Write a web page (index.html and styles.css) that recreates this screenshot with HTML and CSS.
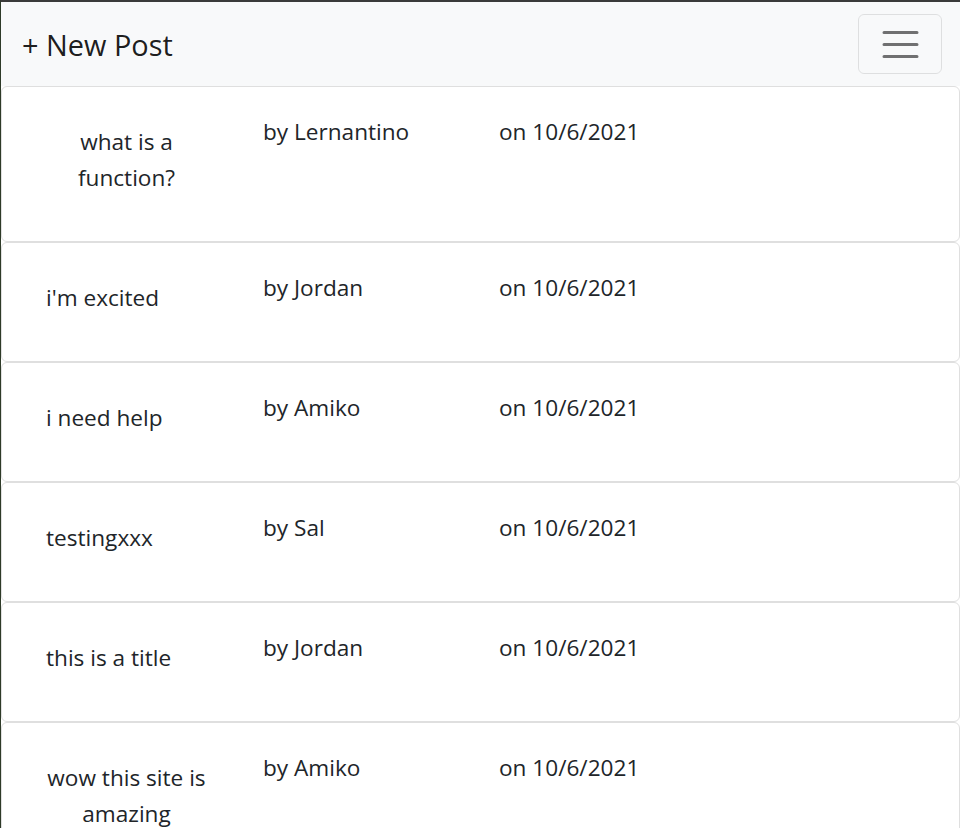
FILE: index.html
```html
<!DOCTYPE html>
<html lang="en">
<head>
<meta charset="utf-8">
<title>Posts</title>
<link rel="stylesheet" href="styles.css">
</head>
<body>
<div class="frame">
  <nav class="navbar">
    <a class="brand" href="#">+ New Post</a>
    <button class="toggler" type="button" aria-label="Toggle navigation">
      <svg class="toggler-icon" viewBox="0 0 30 30" width="45" height="45">
        <path d="M4 7h22M4 15h22M4 23h22" stroke="rgba(0,0,0,0.55)" stroke-width="2" stroke-linecap="round" stroke-miterlimit="10" fill="none"/>
      </svg>
    </button>
  </nav>
  <main class="posts">
    <div class="post">
      <div class="post-title"><span class="title-text">what is a function?</span></div>
      <div class="post-author">by Lernantino</div>
      <div class="post-date">on 10/6/2021</div>
    </div>
    <div class="post">
      <div class="post-title"><span class="title-text">i'm excited</span></div>
      <div class="post-author">by Jordan</div>
      <div class="post-date">on 10/6/2021</div>
    </div>
    <div class="post">
      <div class="post-title"><span class="title-text">i need help</span></div>
      <div class="post-author">by Amiko</div>
      <div class="post-date">on 10/6/2021</div>
    </div>
    <div class="post">
      <div class="post-title"><span class="title-text">testingxxx</span></div>
      <div class="post-author">by Sal</div>
      <div class="post-date">on 10/6/2021</div>
    </div>
    <div class="post">
      <div class="post-title"><span class="title-text">this is a title</span></div>
      <div class="post-author">by Jordan</div>
      <div class="post-date">on 10/6/2021</div>
    </div>
    <div class="post">
      <div class="post-title"><span class="title-text">wow this site is amazing</span></div>
      <div class="post-author">by Amiko</div>
      <div class="post-date">on 10/6/2021</div>
    </div>
  </main>
</div>
</body>
</html>
```

FILE: styles.css
```css
html {
  overflow: hidden;
  background: #2e3a28;
}

body {
  margin: 0;
  font-family: "Open Sans", "Noto Sans", sans-serif;
  font-size: 22.6px;
  line-height: 36px;
  color: #212529;
}

.frame {
  border-top: 2px solid #3a3a3a;
  border-left: 1px solid #2e3a28;
  background: #ffffff;
  min-height: 826px;
}

.navbar {
  display: flex;
  align-items: center;
  justify-content: space-between;
  height: 84px;
  padding: 0 18px 0 21px;
  background: #f8f9fa;
}

.brand {
  font-size: 28.9px;
  line-height: 40px;
  color: rgba(0, 0, 0, 0.9);
  text-decoration: none;
  margin-top: 2px;
}

.toggler {
  display: flex;
  align-items: center;
  justify-content: center;
  width: 84px;
  height: 60px;
  padding: 6px 18px;
  background: transparent;
  border: 1.5px solid rgba(0, 0, 0, 0.1);
  border-radius: 6px;
  box-sizing: border-box;
}

.toggler-icon {
  display: block;
  flex: none;
}

.posts {
  display: flex;
  flex-direction: column;
}

.post {
  display: grid;
  grid-template-columns: 261px 236px 1fr;
  align-items: start;
  padding: 27px 0 28px;
  background: #ffffff;
  border: 1px solid #dfdfdf;
  border-radius: 6px;
}

.post-title {
  padding: 10px 56px 17px 44px;
}

.title-text {
  display: inline-block;
  text-align: center;
}

.post-author,
.post-date {
  white-space: nowrap;
}
```
